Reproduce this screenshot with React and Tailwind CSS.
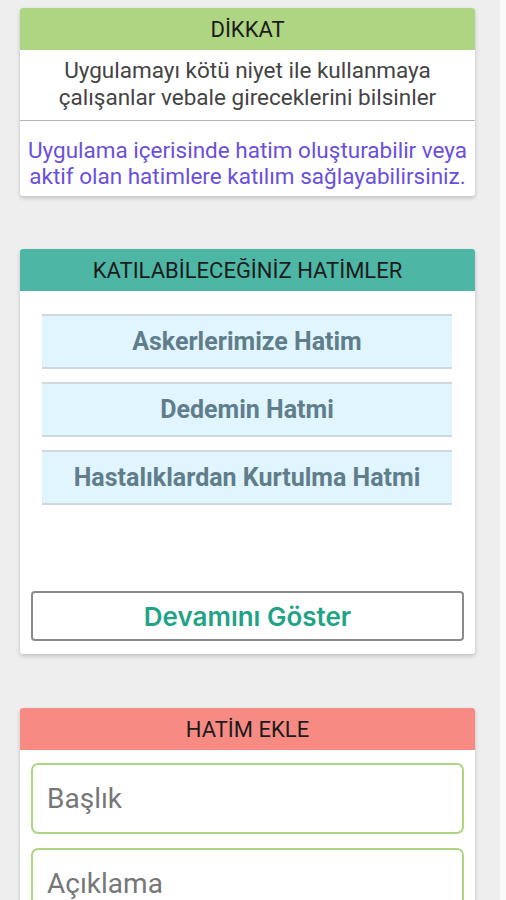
import React from "react";

const items = ["Askerlerimize Hatim", "Dedemin Hatmi", "Hastalıklardan Kurtulma Hatmi"];

function CardHeader({ title, color }) {
  return (
    <div
      className={`flex h-[42px] items-center justify-center rounded-t-[3px] text-[22px] text-[#1c1c1c] ${color}`}
    >
      {title}
    </div>
  );
}

export default function App() {
  return (
    <div className="flex min-h-[900px] w-full bg-[#f9f9f9] font-['Roboto',sans-serif]">
      <div className="flex w-[500px] flex-col bg-[#eeeeee] pt-2 pl-5 pr-[25px]">
        <div className="rounded-[3px] bg-white shadow-[0_2px_4px_rgba(0,0,0,0.2)]">
          <CardHeader title="DİKKAT" color="bg-[#aed581]" />
          <div className="border-b border-[#b5b5b5] px-1 pt-[7px] pb-[9px] text-center text-[22.5px] leading-[27px] text-[#444444]">
            Uygulamayı kötü niyet ile kullanmaya
            <br />
            çalışanlar vebale gireceklerini bilsinler
          </div>
          <div className="px-0 pt-[16px] pb-[7px] text-center text-[22.5px] leading-[26px] text-[#6a4fdf]">
            Uygulama içerisinde hatim oluşturabilir veya
            <br />
            aktif olan hatimlere katılım sağlayabilirsiniz.
          </div>
        </div>

        <div className="mt-[53px] rounded-[3px] bg-white shadow-[0_2px_4px_rgba(0,0,0,0.2)]">
          <CardHeader title="KATILABİLECEĞİNİZ HATİMLER" color="bg-[#4db6a5]" />
          <div className="flex flex-col gap-[13px] pt-[23px] pl-[22px] pr-[23px]">
            {items.map((t) => (
              <div
                key={t}
                className="flex h-[55px] items-center justify-center border-y-2 border-[#cfd8dc] bg-[#e1f5fe] text-[25px] font-bold text-[#607d8b]"
              >
                {t}
              </div>
            ))}
          </div>
          <div className="px-[11px] pt-[86px] pb-[13px]">
            <div className="flex h-[50px] items-center justify-center rounded-[4px] border-2 border-[#8a8a8a] font-['Inter',sans-serif] text-[26px] font-semibold text-[#1fa386]">
              Devamını Göster
            </div>
          </div>
        </div>

        <div className="mt-[54px] rounded-[3px] bg-white shadow-[0_2px_4px_rgba(0,0,0,0.2)]">
          <CardHeader title="HATİM EKLE" color="bg-[#f78b84]" />
          <div className="flex flex-col gap-[14px] px-[11px] pt-[13px] pb-4">
            <div className="flex h-[71px] items-center rounded-[7px] border-2 border-[#aed581] px-[14px] text-[28px] text-[#777777]">
              Başlık
            </div>
            <div className="flex h-[71px] items-center rounded-[7px] border-2 border-[#aed581] px-[14px] text-[28px] text-[#777777]">
              Açıklama
            </div>
          </div>
        </div>
      </div>
      <div className="flex-1" />
    </div>
  );
}
